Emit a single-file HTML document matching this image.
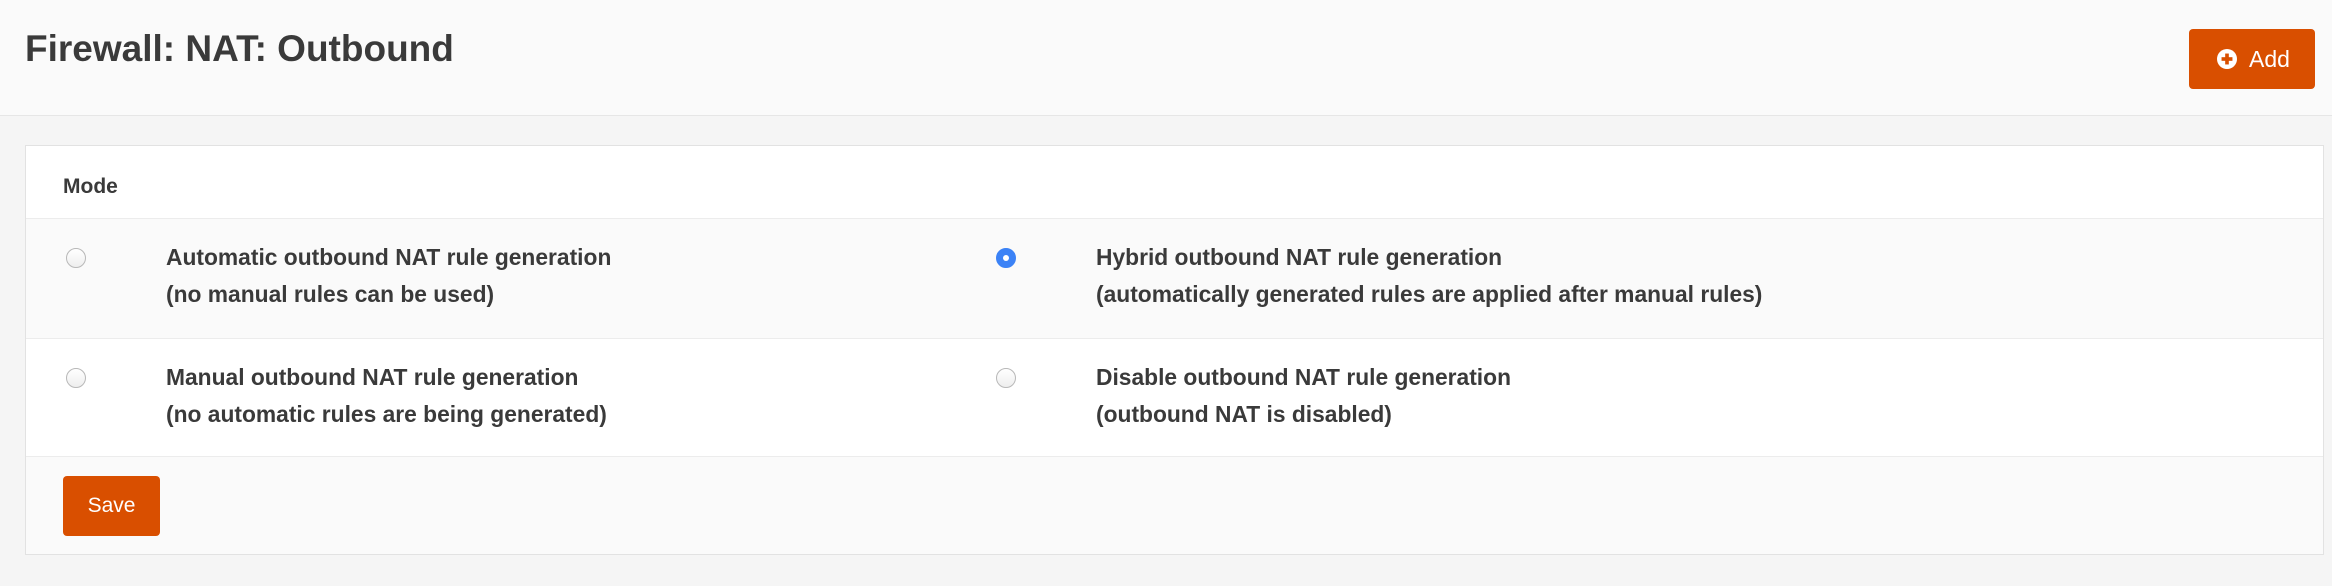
<!DOCTYPE html>
<html><head><meta charset="utf-8"><style>
body{margin:0;width:2332px;height:586px;background:#f5f5f5;font-family:"Liberation Sans",sans-serif;color:#3a3a3a;position:relative;overflow:hidden}
.hdr{position:absolute;left:0;top:0;width:2332px;height:115px;background:#fafafa;border-bottom:1px solid #e6e6e6}
.title{position:absolute;left:25px;top:28px;font-size:37px;font-weight:bold;white-space:nowrap;color:#3a3a3a}
.add{position:absolute;left:2189px;top:29px;width:126px;height:60px;background:#d94f00;border-radius:4px;color:#fff;font-size:23px}
.add span{position:absolute;left:60px;top:17px}
.add svg{position:absolute;left:28px;top:20px}
.panel{position:absolute;left:25px;top:145px;width:2297px;height:408px;border:1px solid #e2e2e2;background:#fff}
.row{position:absolute;left:0;width:100%;border-top:1px solid #ececec}
.t{position:absolute;font-size:22.8px;font-weight:bold;white-space:nowrap;color:#3a3a3a;line-height:37px}
.radio{position:absolute;width:18px;height:18px;border:1px solid #b8b8b8;border-radius:50%;background:linear-gradient(#fff,#eee)}
.sel{background:#3b82f6;border-color:#3b82f6}
.sel:after{content:"";position:absolute;left:6px;top:6px;width:6px;height:6px;background:#fff;border-radius:50%}
.save{position:absolute;left:37px;top:330px;width:97px;height:60px;background:#d94f00;border-radius:4px;color:#fff;font-size:21px;text-align:center;line-height:60px}
</style></head><body>
<div class="hdr">
<div class="title">Firewall: NAT: Outbound</div>
<div class="add"><svg width="20" height="20" viewBox="0 0 22 22"><circle cx="11" cy="11" r="11" fill="#fff"/><rect x="5" y="9" width="12" height="4" fill="#d94f00"/><rect x="9" y="5" width="4" height="12" fill="#d94f00"/></svg><span>Add</span></div>
</div>
<div class="panel">
<div class="t" style="left:37px;top:22px;font-size:21px">Mode</div>
<div class="row" style="top:72px;height:120px;background:#fafafa">
<div class="radio" style="left:40px;top:29px"></div>
<div class="t" style="left:140px;top:20px">Automatic outbound NAT rule generation<br>(no manual rules can be used)</div>
<div class="radio sel" style="left:970px;top:29px"></div>
<div class="t" style="left:1070px;top:20px">Hybrid outbound NAT rule generation<br>(automatically generated rules are applied after manual rules)</div>
</div>
<div class="row" style="top:192px;height:118px;background:#fff">
<div class="radio" style="left:40px;top:29px"></div>
<div class="t" style="left:140px;top:20px">Manual outbound NAT rule generation<br>(no automatic rules are being generated)</div>
<div class="radio" style="left:970px;top:29px"></div>
<div class="t" style="left:1070px;top:20px">Disable outbound NAT rule generation<br>(outbound NAT is disabled)</div>
</div>
<div class="row" style="top:310px;height:97px;background:#fafafa"></div>
<div class="save">Save</div>
</div>
</body></html>
